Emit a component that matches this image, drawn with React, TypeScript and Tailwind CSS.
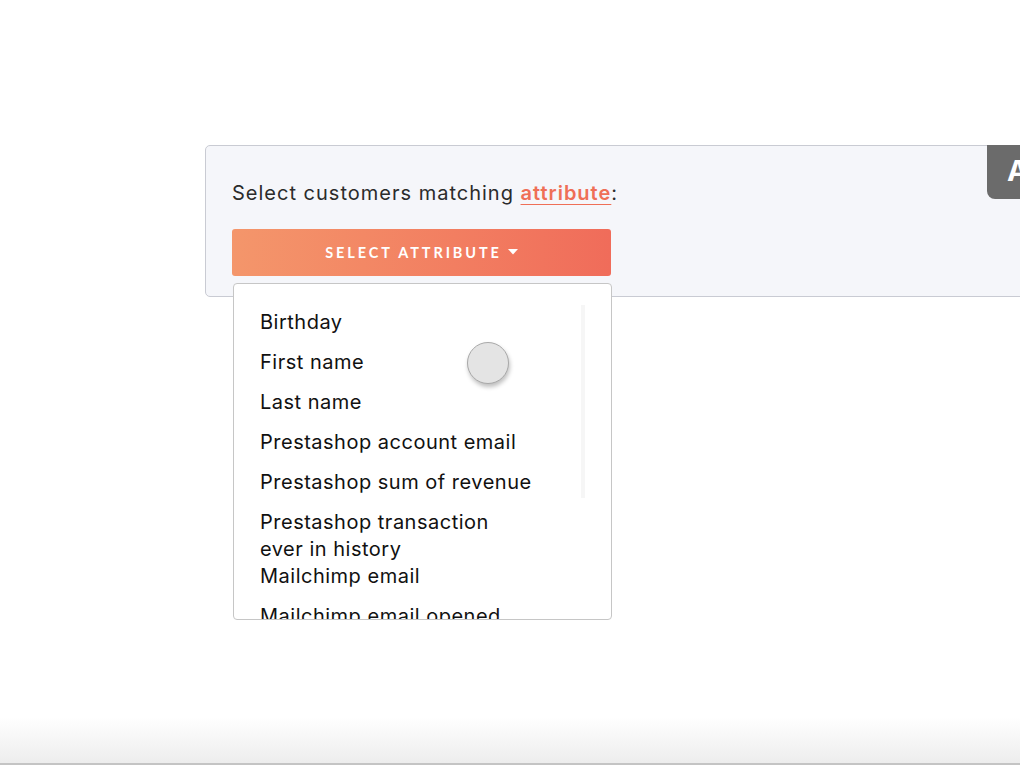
const ITEMS: { label: React.ReactNode; tall?: boolean }[] = [
  { label: 'Birthday' },
  { label: 'First name' },
  { label: 'Last name' },
  { label: 'Prestashop account email' },
  { label: 'Prestashop sum of revenue' },
  {
    label: (
      <>
        Prestashop transaction
        <br />
        ever in history
      </>
    ),
    tall: true,
  },
  { label: 'Mailchimp email' },
  { label: 'Mailchimp email opened' },
  { label: 'Mailchimp email clicked' },
];

function App() {
  return (
    <div
      className="relative h-[765px] w-[1020px] overflow-hidden bg-white"
      style={{ fontFamily: 'Inter, "Noto Sans", sans-serif' }}
    >
      <div className="pl-[205px] pt-[145px]">
        {/* filter card */}
        <section className="relative h-[152px] w-[860px] rounded-[5px] border border-[#c9cbd3] bg-[#f5f6fa] pl-[26px] pt-[33px]">
          <p className="text-[20px] leading-[28px] tracking-[1px] text-[#2b2b2b]">
            Select customers matching{' '}
            <span className="font-semibold text-[#ef6f57] underline decoration-[1px] underline-offset-[4px]">
              attribute
            </span>
            :
          </p>

          <button
            type="button"
            className="mt-[22px] flex h-[47px] w-[379px] items-center justify-center gap-[6px] rounded-[3px] bg-gradient-to-r from-[#f4966b] to-[#f06c5a] text-[14.5px] font-bold tracking-[2.9px] text-white"
            style={{ fontFamily: 'Lato, Inter, sans-serif' }}
          >
            SELECT ATTRIBUTE
            <svg width="10" height="6" viewBox="0 0 10 6" className="mb-[1px]">
              <path d="M0 0h10L5 5.5z" fill="white" />
            </svg>
          </button>

          {/* right-hand tab */}
          <div className="absolute left-[781px] top-[-1px] h-[54px] w-[60px] rounded-b-[8px] bg-[#6b6b6b] pl-[20px] pt-[9px]">
            <span className="text-[29px] font-bold leading-[34px] text-white">A</span>
          </div>

          {/* dropdown */}
          <div className="absolute left-[27px] top-[137px] z-10 h-[337px] w-[379px] overflow-hidden rounded-[4px] border border-[#c6c6c6] bg-white pl-[26px] pt-[18px]">
            <div className="absolute left-[347px] top-[21px] h-[193px] w-[4px] bg-[#f6f6f6]" />
            <ul className="text-[20px] leading-[27px] tracking-[0.5px] text-[#111111]">
              {ITEMS.map((item, i) => (
                <li
                  key={i}
                  className={item.tall ? 'h-[54px] pt-[7px]' : 'h-[40px] pt-[7px]'}
                >
                  {item.label}
                </li>
              ))}
            </ul>
          </div>
        </section>
      </div>

      {/* cursor marker */}
      <div className="absolute left-[467px] top-[342px] z-20 h-[42px] w-[42px] rounded-full border border-[#a9a9a9] bg-[#e4e4e4] shadow-[1px_3px_4px_rgba(0,0,0,0.25)]" />

      {/* bottom fade */}
      <div className="absolute bottom-0 left-0 h-[48px] w-full bg-gradient-to-b from-white to-[#ececec]" />
      <div className="absolute bottom-0 left-0 h-[2px] w-full bg-[#c4c4c4]" />
    </div>
  );
}

export default App;
